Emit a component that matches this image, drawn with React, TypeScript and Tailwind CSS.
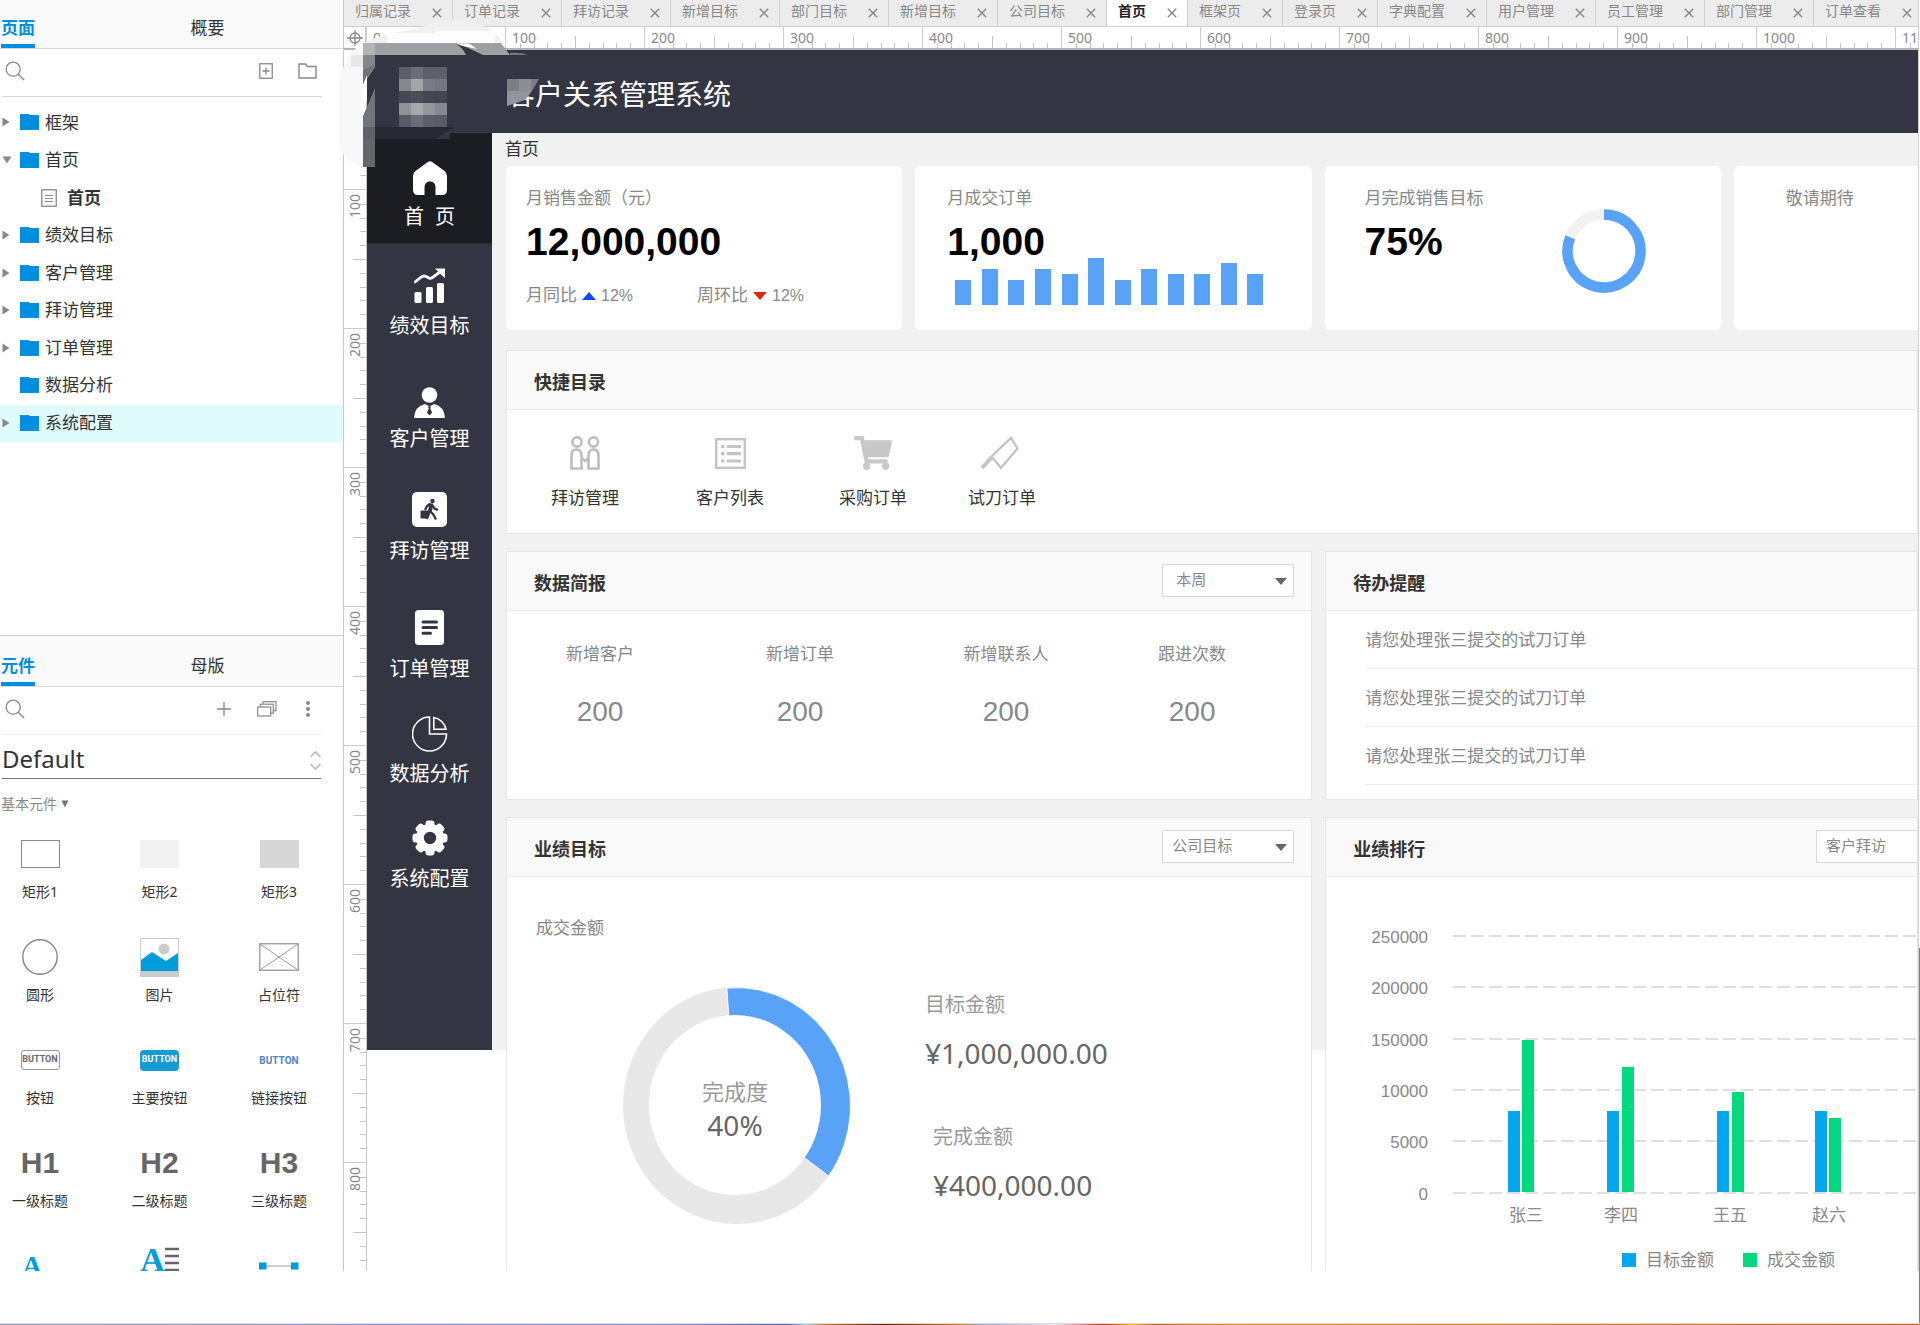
import React from "react";
import { FaShoppingCart } from "react-icons/fa";

const pageTree = [
  { label: "框架", state: "closed" },
  { label: "首页", state: "open" },
  { label: "首页", state: "page" },
  { label: "绩效目标", state: "closed" },
  { label: "客户管理", state: "closed" },
  { label: "拜访管理", state: "closed" },
  { label: "订单管理", state: "closed" },
  { label: "数据分析", state: "leaf" },
  { label: "系统配置", state: "closed", selected: true },
];

const fileTabs = [
  "归属记录", "订单记录", "拜访记录", "新增目标", "部门目标", "新增目标", "公司目标", "首页",
  "框架页", "登录页", "字典配置", "用户管理", "员工管理", "部门管理", "订单查看",
];

const rulerMarks = [0, 100, 200, 300, 400, 500, 600, 700, 800, 900, 1000, 1100];
const minorTicks = [0, 1, 2, 3, 4, 5, 6, 7, 8, 9];

/* ---------- small icons ---------- */

function SearchIcon() {
  return (
    <svg width="20" height="20" viewBox="0 0 22 22" fill="none" stroke="#888" strokeWidth="1.5">
      <circle cx="9" cy="9" r="7.7" />
      <path d="M14.3 14.3 21 21" />
    </svg>
  );
}

function FolderIcon() {
  return (
    <svg width="19" height="16" viewBox="0 0 19 16" fill="#008fe0">
      <path d="M0 0h9l0.500 1H19v15H0z" />
    </svg>
  );
}

function PageIcon() {
  return (
    <svg width="16" height="18" viewBox="0 0 16 18" fill="none" stroke="#888">
      <rect x="0.75" y="0.75" width="14.5" height="16.5" strokeWidth="1.3" />
      <path d="M4 6.5h8M4 9.5h8M4 12.5h8" />
    </svg>
  );
}

function Caret({ open }: { open: boolean }) {
  return open ? (
    <svg width="10" height="8" viewBox="0 0 10 8" fill="#888"><path d="M0.5 0.5h9L5 7.5z" /></svg>
  ) : (
    <svg width="8" height="10" viewBox="0 0 8 10" fill="#888"><path d="M0.5 0.5v9L7.5 5z" /></svg>
  );
}

/* ---------- left panel ---------- */

function PanelTabs({ first, second, className }: { first: string; second: string; className: string }) {
  return (
    <div className={"grid grid-cols-[190fr_153fr] border-b border-[#d6d6d6] bg-[#fafafa] pl-px text-[17px] leading-6 " + className}>
      <div className="flex">
        <button className="flex items-end border-b-4 border-[#008fe0] pb-1 font-bold text-[#008fe0]">{first}</button>
      </div>
      <div className="flex">
        <button className="flex items-end border-b-4 border-transparent pb-1 text-[#333]">{second}</button>
      </div>
    </div>
  );
}

function PagesPanel() {
  return (
    <section className="flex h-[635px] shrink-0 flex-col">
      <PanelTabs first="页面" second="概要" className="h-[49px]" />
      <div className="ml-0.5 mr-[21px] flex h-12 items-center border-b border-[#d6d6d6] pb-1 pl-[3px] pr-[5px]">
        <SearchIcon />
        <input aria-label="搜索页面" className="min-w-0 flex-1 outline-none" />
        <button aria-label="添加页面" className="mr-[25px]">
          <svg width="14" height="16" viewBox="0 0 14 16" fill="none" stroke="#888" strokeWidth="1.3">
            <rect x="0.75" y="0.75" width="12.5" height="14.5" />
            <path d="M3.5 8h7M7 4.5v7" />
          </svg>
        </button>
        <button aria-label="添加文件夹">
          <svg width="19" height="16" viewBox="0 0 19 16" fill="none" stroke="#888" strokeWidth="1.4">
            <path d="M1 1h6.500l2 2.500H18V15H1z" />
          </svg>
        </button>
      </div>
      <ul className="mt-[7px] flex h-[338px] flex-col text-[17px] text-[#333]">
        {pageTree.map((n, i) => (
          <li key={i} className={n.selected ? "flex flex-1 bg-[#e0fbfb]" : "flex flex-1"}>
            {n.state === "page" ? (
              <button className="flex w-full items-center gap-2.5 pl-[41px] font-bold">
                <PageIcon />
                {n.label}
              </button>
            ) : (
              <button className="flex w-full items-center pb-px pl-0.5">
                <span className="w-[18px]">{n.state !== "leaf" && <Caret open={n.state === "open"} />}</span>
                <FolderIcon />
                <span className="pl-1.5">{n.label}</span>
              </button>
            )}
          </li>
        ))}
      </ul>
    </section>
  );
}

const widgets: { label?: string; icon: React.ReactNode }[] = [
  { label: "矩形1", icon: <span className="block h-7 w-[39px] border border-[#888] bg-white" /> },
  { label: "矩形2", icon: <span className="block h-7 w-[39px] bg-[#f2f2f2]" /> },
  { label: "矩形3", icon: <span className="block h-7 w-[39px] bg-[#d7d7d7]" /> },
  {
    label: "圆形",
    icon: (
      <svg width="36" height="36" viewBox="0 0 36 36" fill="none" stroke="#888" strokeWidth="1.400"><circle cx="18" cy="18" r="17.200" /></svg>
    ),
  },
  {
    label: "图片",
    icon: (
      <svg width="39" height="39" viewBox="0 0 39 39">
        <rect x="0.5" y="0.5" width="38" height="38" fill="#fff" stroke="#ccc" />
        <rect x="0" y="33" width="39" height="6" fill="#cbcbcb" />
        <circle cx="24" cy="11" r="5.5" fill="#cbcbcb" />
        <path d="M1 22 12 14 26 23 38 15V33H1z" fill="#009ddc" />
      </svg>
    ),
  },
  {
    label: "占位符",
    icon: (
      <svg width="40" height="28" viewBox="0 0 40 28" fill="none" stroke="#999">
        <rect x="0.75" y="0.75" width="38.500" height="26.500" strokeWidth="1.3" />
        <path d="M1 1 39 27M39 1 1 27" />
      </svg>
    ),
  },
  { label: "按钮", icon: <span className="flex h-5 w-[39px] items-center justify-center rounded-[3px] border border-[#999] font-['Roboto'] text-[9px] font-bold text-[#666]">BUTTON</span> },
  { label: "主要按钮", icon: <span className="flex h-[21px] w-[39px] items-center justify-center rounded-[4px] bg-[#169bd5] font-['Roboto'] text-[9px] font-bold text-white">BUTTON</span> },
  { label: "链接按钮", icon: <span className="font-['Roboto'] text-[10px] font-bold text-[#4a86c8]">BUTTON</span> },
  { label: "一级标题", icon: <span className="font-['Liberation_Sans'] text-[30px] font-bold leading-9 text-[#666]">H1</span> },
  { label: "二级标题", icon: <span className="font-['Liberation_Sans'] text-[30px] font-bold leading-9 text-[#666]">H2</span> },
  { label: "三级标题", icon: <span className="font-['Liberation_Sans'] text-[30px] font-bold leading-9 text-[#666]">H3</span> },
  { icon: <span className="pr-4 font-['Liberation_Serif'] text-[28px] font-bold leading-9 text-[#009ddc]">A</span> },
  {
    icon: (
      <span className="flex h-10 items-start">
        <span className="font-['Liberation_Serif'] text-[34px] font-bold leading-7 text-[#009ddc]">A</span>
        <svg width="14" height="34" viewBox="0 0 14 34" stroke="#666" strokeWidth="2.500">
          <path d="M0 3h14M0 10h14M0 17h14M0 24h14M0 31h14" />
        </svg>
      </span>
    ),
  },
  {
    icon: (
      <svg width="40" height="8" viewBox="0 0 40 8" fill="#009ddc">
        <path d="M7 4h26" stroke="#bbb" strokeWidth="1.500" />
        <rect x="0" y="0.500" width="7.500" height="7" />
        <rect x="32" y="0.500" width="7.500" height="7" />
      </svg>
    ),
  },
];

function WidgetsPanel() {
  return (
    <section className="min-h-0 flex-1 overflow-hidden border-t border-[#d0d0d0]">
      <PanelTabs first="元件" second="母版" className="h-[51px]" />
      <div className="ml-0.5 mr-[21px] flex h-12 items-center border-b border-[#ececec] pb-1 pl-[3px] pr-3">
        <SearchIcon />
        <input aria-label="搜索元件" className="min-w-0 flex-1 outline-none" />
        <button aria-label="添加元件库" className="mr-[26px]">
          <svg width="14" height="14" viewBox="0 0 14 14" stroke="#888" strokeWidth="1.3"><path d="M0 7h14M7 0v14" /></svg>
        </button>
        <button aria-label="元件库" className="mr-[29px]">
          <svg width="20" height="16" viewBox="0 0 20 16" fill="#fff" stroke="#888" strokeWidth="1.200">
            <rect x="6" y="0.700" width="13" height="9" />
            <rect x="3.300" y="3.200" width="13" height="9" />
            <rect x="0.700" y="6" width="13" height="9" />
          </svg>
        </button>
        <button aria-label="更多">
          <svg width="4" height="16" viewBox="0 0 4 16" fill="#888">
            <circle cx="2" cy="2" r="2" /><circle cx="2" cy="8" r="2" /><circle cx="2" cy="14" r="2" />
          </svg>
        </button>
      </div>
      <div className="relative ml-0.5 mr-[22px] border-b border-[#777]">
        <select aria-label="元件库选择" className="block h-[43px] w-full appearance-none bg-transparent pt-1 text-[24px] leading-9 text-[#333] outline-none">
          <option>Default</option>
        </select>
        <svg className="pointer-events-none absolute right-0 top-4" width="11" height="20" viewBox="0 0 11 20" fill="none" stroke="#bbb" strokeWidth="1.700">
          <path d="M0.500 6 5.500 1 10.500 6M0.500 13 5.500 18 10.500 13" />
        </svg>
      </div>
      <button className="mt-[14px] flex items-center gap-1 pl-px text-[14px] leading-[22px] text-[#888]">
        基本元件
        <svg width="8" height="8" viewBox="0 0 8 8" fill="#777"><path d="M0.500 0.500h7L4 7.500z" /></svg>
      </button>
      <ul className="mt-[19px] grid grid-cols-[80px_159px_80px] text-[14px] text-[#333]">
        {widgets.map((w, i) => (
          <li key={i} className="flex flex-col items-center">
            <span className="flex h-10 items-center">{w.icon}</span>
            {w.label && <span className="mb-[35px] mt-2 leading-5">{w.label}</span>}
          </li>
        ))}
      </ul>
    </section>
  );
}

/* ---------- editor chrome ---------- */

function FileTabs() {
  return (
    <nav className="flex h-[27px] shrink-0 overflow-hidden border-b border-[#cfcfcf] bg-[#ececec] text-[14px] text-[#888]">
      {fileTabs.map((t, i) => (
        <div
          key={i}
          className={
            t === "首页"
              ? "flex shrink-0 gap-[21px] border-r border-[#cfcfcf] bg-white px-2.5 pl-[11px] font-bold text-[#222]"
              : "flex shrink-0 gap-[21px] border-r border-[#cfcfcf] px-2.5 pl-[11px]"
          }
        >
          <a href="#" className="leading-[22px]">{t}</a>
          <button aria-label={"关闭" + t}>
            <svg width="10" height="10" viewBox="0 0 10 10" stroke="#888" strokeWidth="1.400"><path d="M0.800 0.800 9.200 9.200M9.200 0.800 0.800 9.200" /></svg>
          </button>
        </div>
      ))}
    </nav>
  );
}

function HorizontalRuler() {
  return (
    <div className="flex h-[23px] shrink-0 overflow-hidden border-b-2 border-[#b4b4b8] bg-white text-[14px] text-[#888]">
      <div className="flex w-[22px] shrink-0 items-center justify-center border-r border-[#c8c8c8]">
        <svg width="16" height="16" viewBox="0 0 16 16" fill="none" stroke="#888" strokeWidth="1.300">
          <circle cx="8" cy="8" r="5" />
          <path d="M8 0v16M0 8h16" />
        </svg>
      </div>
      {rulerMarks.map((m) => (
        <div key={m} className="relative grid w-[139px] shrink-0 grid-cols-10 items-end border-l border-[#ccc]">
          {minorTicks.map((k) => (
            <span
              key={k}
              className={k === 0 ? "" : k === 5 ? "h-3 border-l border-[#c4c4c4]" : "h-[5px] border-l border-[#c4c4c4]"}
            />
          ))}
          <span className="absolute left-1.5 top-0 leading-[22px]">{m}</span>
        </div>
      ))}
    </div>
  );
}

function VerticalRuler() {
  return (
    <div className="w-[23px] shrink-0 overflow-hidden border-r border-[#c8c8c8] bg-white text-[14px] text-[#888]">
      {rulerMarks.slice(0, 9).map((m) => (
        <div key={m} className={m === 0 ? "relative grid h-[139px] grid-rows-10 justify-end" : "relative grid h-[139px] grid-rows-10 justify-end border-t border-[#ccc]"}>
          {minorTicks.map((k) => (
            <span
              key={k}
              className={k === 0 ? "" : k === 5 ? "ml-auto w-[13px] border-t border-[#c4c4c4]" : "ml-auto w-1.5 border-t border-[#c4c4c4]"}
            />
          ))}
          <span className="absolute left-0 top-1 rotate-180 leading-[22px] [writing-mode:vertical-rl]">{m}</span>
        </div>
      ))}
    </div>
  );
}

const logoCells = [
  ["#5c5e69", "#6c6e77", "#5d5f6a", "#5d5f6a"],
  ["#868890", "#a5a5a9", "#7a7c85", "#75777f"],
  ["#454955", "#4b4e59", "#444751", "#41454f"],
  ["#90929a", "#a8a8ac", "#94969d", "#868890"],
  ["#575a66", "#6b6d76", "#5c5f6a", "#595c68"],
];

/* Pixelated logo with the brush marks round it. */
function LogoMosaic() {
  return (
    <svg className="pointer-events-none absolute -left-[9px] top-[15px]" width="215" height="160" viewBox="0 0 215 160">
      <path d="M28 28 Q44 20 62 17 Q84 15 98 7 Q118 2 136 7 Q158 12 168 28z" fill="#f0f0f0" />
      <path d="M52 18H100V16H160V28H52z" fill="#fdfdfd" />
      <path d="M28 28 Q14 36 8 54 Q4 60 4 72V126Q5 145 28 151z" fill="#f8f8f8" />
      <path d="M16 40H28V52H16z" fill="#e8e8e8" />
      <path d="M28 28H166L175 40H28z" fill="#9fa0a4" />
      <path d="M28 28H40V40H28z" fill="#b4b4b7" />
      <path d="M121 29 131 32 148 40H131Q128 33 121 29z" fill="#333642" />
      <path d="M121 28.500H134L142 34 128 31z" fill="#fff" />
      <path d="M175 38Q185 37 193 40H175z" fill="#777983" />
      <path d="M40 40H115V124H40z" fill="#333642" />
      <path d="M32 56H40V112H32z" fill="#333642" />
      <path d="M28 40H40V52L28 70z" fill="#84868c" />
      <path d="M28 55 40 50 32 62 28 70z" fill="#717379" />
      <path d="M28 70 32 60V84L28 101z" fill="#fff" />
      <path d="M40 73 28 101V152H40z" fill="#72747c" />
      <path d="M28 112H40V124H28z" fill="#5f616a" />
      <path d="M28 124H40V152H28z" fill="#66676b" />
      <path d="M40 112H120L100 124H40z" fill="#262833" />
      {logoCells.map((row, r) =>
        row.map((c, k) => <rect key={r + "-" + k} x={64 + k * 12} y={52 + r * 12} width="12" height="12" fill={c} />)
      )}
      <path d="M172 64H204L197 76H172z" fill="#7c7e86" />
      <path d="M184 64H196V76H184z" fill="#8c8e96" />
      <path d="M172 76H197L190 85 172 91z" fill="#92949b" />
    </svg>
  );
}

/* ---------- prototype sidebar ---------- */

const gearTeeth = [0, 45, 90, 135, 180, 225, 270, 315];

const navItems: { label: string; box: string; gap: string; icon: React.ReactNode }[] = [
  {
    label: "首  页",
    box: "border-b border-[#2a2c36] bg-[#1c1d22] pt-[27px] pb-3",
    gap: "mt-[7px]",
    icon: (
      <svg width="34" height="34" viewBox="0 0 34 34" fill="#fff">
        <path d="M14.500 1.200Q17-0.800 19.500 1.200L31.500 10Q34 12 34 15V29Q34 34 29 34H22.500V26Q22 20.500 17 20.500Q12 20.500 11.500 26V34H5Q0 34 0 29V15Q0 12 2.500 10z" />
      </svg>
    ),
  },
  {
    label: "绩效目标",
    box: "pt-6",
    gap: "mt-2",
    icon: (
      <svg width="31" height="36" viewBox="0 0 31 36" fill="#fff">
        <rect x="0.500" y="24" width="7" height="11" rx="1.500" />
        <rect x="12" y="19" width="7" height="16" rx="1.500" />
        <rect x="23" y="15" width="7" height="20" rx="1.500" />
        <path d="M1 14 8 8.500Q10 7.500 12 8.500L15 10Q17 11 19 9L28 2.500" fill="none" stroke="#fff" strokeWidth="2.800" strokeLinecap="round" />
        <path d="M21 0.500H31V10L27.500 7z" />
      </svg>
    ),
  },
  {
    label: "客户管理",
    box: "pt-11",
    gap: "mt-[5px]",
    icon: (
      <svg width="31" height="31" viewBox="0 0 31 31" fill="#fff">
        <circle cx="15.500" cy="8" r="7.800" />
        <path d="M0 31Q1 19 11 17L15.500 19.500 20 17Q30 19 31 31z" />
        <path d="M13.800 19.500H17.200L16.200 21.500 18.200 25.500 15.500 28.500 12.800 25.500 14.800 21.500z" fill="#333642" />
      </svg>
    ),
  },
  {
    label: "拜访管理",
    box: "pt-[38px]",
    gap: "mt-2.5",
    icon: (
      <svg width="35" height="35" viewBox="0 0 35 35">
        <rect width="35" height="35" rx="5" fill="#fff" />
        <circle cx="20.500" cy="9" r="2.200" fill="#333642" />
        <path d="M18.500 11.500 15 14 13 18M19 12 17.500 19 21 22 24 27.500M17.500 19 16.500 23 14.500 27M20 13 22.500 16.500 26 18" fill="none" stroke="#333642" strokeWidth="2.300" />
        <path d="M17 11.500H21L20 20H16z" fill="#333642" />
        <rect x="8.500" y="18.500" width="8" height="8" rx="1" fill="#333642" />
      </svg>
    ),
  },
  {
    label: "订单管理",
    box: "pt-11",
    gap: "mt-2.5",
    icon: (
      <svg width="29" height="35" viewBox="0 0 29 35">
        <rect width="29" height="35" rx="3.500" fill="#fff" />
        <path d="M8 12H21.500M8 17.500H21.500M8 23.200H15.500" stroke="#333642" strokeWidth="3" strokeLinecap="round" />
      </svg>
    ),
  },
  {
    label: "数据分析",
    box: "pt-[33px]",
    gap: "mt-2",
    icon: (
      <svg width="36" height="36" viewBox="0 0 36 36" fill="none" stroke="#fff" strokeWidth="1.600">
        <path d="M17.500 1V18H34.500A17 17 0 1 1 17.500 1z" />
        <path d="M21.800 1.500A15 15 0 0 1 34 13.200H21.800z" />
      </svg>
    ),
  },
  {
    label: "系统配置",
    box: "pt-8",
    gap: "mt-[9px]",
    icon: (
      <svg width="36" height="36" viewBox="-18 -18 36 36">
        {gearTeeth.map((a) => (
          <rect key={a} x="-4.500" y="-17.500" width="9" height="12" rx="3" fill="#fff" transform={"rotate(" + a + ")"} />
        ))}
        <circle r="14" fill="#fff" />
        <circle r="6.200" fill="#333642" />
      </svg>
    ),
  },
];

function SideNav() {
  return (
    <nav className="flex w-[125px] shrink-0 flex-col self-start bg-[#333642] pb-[157px] text-[20px] text-white">
      {navItems.map((n) => (
        <a key={n.label} href="#" className={"flex flex-col items-center " + n.box}>
          <span className="flex h-9 items-center">{n.icon}</span>
          <span className={"whitespace-pre leading-7 " + n.gap}>{n.label}</span>
        </a>
      ))}
    </nav>
  );
}

/* ---------- dashboard ---------- */

const barHeights = [25, 36, 25, 36, 31, 47, 25, 36, 31, 31, 42, 31];

function KpiCards() {
  return (
    <div className="grid h-[164px] grid-cols-[396fr_396fr_396fr_184fr] gap-[13px] text-[17px] text-[#888]">
      <section className="min-w-0 rounded-[5px] bg-white pl-5 pt-5">
        <h2 className="leading-[26px]">月销售金额（元）</h2>
        <p className="mt-2 text-[39px] font-bold leading-[44px] text-black">12,000,000</p>
        <div className="mt-5 flex items-center leading-6">
          <span>月同比</span>
          <svg className="mx-1" width="16" height="8" viewBox="0 0 16 8" fill="#0f4bff"><path d="M8 0 15 8H1z" /></svg>
          <span className="text-[16px]">12%</span>
          <span className="ml-16">周环比</span>
          <svg className="mx-1" width="16" height="8" viewBox="0 0 16 8" fill="#e0230f"><path d="M1 0H15L8 8z" /></svg>
          <span className="text-[16px]">12%</span>
        </div>
      </section>
      <section className="min-w-0 rounded-[5px] bg-white pl-8 pt-5">
        <h2 className="leading-[26px]">月成交订单</h2>
        <p className="mt-2 text-[39px] font-bold leading-[44px] text-black">1,000</p>
        <div className="-mt-1.5 ml-2 mr-12 flex h-[47px] items-end justify-between">
          {barHeights.map((h, i) => (
            <span key={i} className="w-4 bg-[#58a2f7]" style={{ height: h }} />
          ))}
        </div>
      </section>
      <section className="flex min-w-0 justify-between rounded-[5px] bg-white pl-10 pr-[74px] pt-5">
        <div>
          <h2 className="leading-[26px]">月完成销售目标</h2>
          <p className="mt-2 text-[39px] font-bold leading-[44px] text-black">75%</p>
        </div>
        <svg className="mt-[22px]" width="86" height="86" viewBox="-43 -43 86 86" fill="none" strokeWidth="10.500">
          <circle r="36.500" stroke="#f2f2f2" />
          <path d="M0-36.500A36.500 36.500 0 1 1-33.800-13.700" stroke="#58a2f7" />
        </svg>
      </section>
      <section className="min-w-0 rounded-l-[5px] bg-white pl-[52px] pt-5">
        <h2 className="leading-[26px]">敬请期待</h2>
      </section>
    </div>
  );
}

function Panel({ title, action, children }: { title: string; action?: React.ReactNode; children: React.ReactNode }) {
  return (
    <section className="flex min-w-0 flex-col overflow-hidden border border-[#e6e6e6] bg-white">
      <header className="flex h-[59px] shrink-0 items-center justify-between border-b border-[#ebebeb] bg-[#f9f9f9] pl-[27px] pr-[17px]">
        <h2 className="pt-1.5 text-[18px] font-bold text-[#333]">{title}</h2>
        {action}
      </header>
      {children}
    </section>
  );
}

function Picker({ label, value, pad }: { label: string; value: string; pad: string }) {
  return (
    <div className="relative -mt-0.5 w-[132px] shrink-0">
      <select aria-label={label} className={"block h-[33px] w-full appearance-none border border-[#d9d9d9] bg-white text-[15px] text-[#888] outline-none " + pad}>
        <option>{value}</option>
      </select>
      <svg className="pointer-events-none absolute right-[7px] top-[14px]" width="12" height="7" viewBox="0 0 12 7" fill="#666"><path d="M0 0H12L6 7z" /></svg>
    </div>
  );
}

const shortcuts: { label: string; box: string; icon: React.ReactNode }[] = [
  {
    label: "拜访管理",
    box: "",
    icon: (
      <svg width="30" height="34" viewBox="0 0 30 34" fill="none" stroke="#bdbdbd" strokeWidth="2.600">
        <circle cx="7" cy="6" r="4.600" /><circle cx="23.500" cy="6" r="4.600" />
        <path d="M1.500 32.500V20Q1.500 13.500 6.500 13.500 11.500 13.500 11.500 20V32.500z" />
        <path d="M18.500 32.500V20Q18.500 13.500 23.500 13.500 28.500 13.500 28.500 20V32.500z" />
        <path d="M11.500 22 15 25 18.500 22" />
      </svg>
    ),
  },
  {
    label: "客户列表",
    box: "ml-[77px]",
    icon: (
      <svg width="31" height="31" viewBox="0 0 31 31" fill="none" stroke="#c4c4c4" strokeWidth="2.400">
        <rect x="1.200" y="1.200" width="28.600" height="28.600" />
        <path d="M6 8.500h3.500M12 8.500h14M6 15.700h3.500M12 15.700h14M6 23h3.500M12 23h14" strokeWidth="3.200" />
      </svg>
    ),
  },
  { label: "采购订单", box: "ml-[75px]", icon: <FaShoppingCart size={38} color="#c8c8c8" /> },
  {
    label: "试刀订单",
    box: "ml-[61px]",
    icon: (
      <svg className="mr-1.5" width="39" height="34" viewBox="0 0 39 34" fill="none" stroke="#c4c4c4" strokeWidth="2.400">
        <path d="M31 1.800 37.500 12.500 21 32 11.500 20.500z" />
        <path d="M12 21 2 32" strokeWidth="4" />
      </svg>
    ),
  },
];

const briefing = ["新增客户", "新增订单", "新增联系人", "跟进次数"];

const chartRows = [
  { label: "250000", y: 59 }, { label: "200000", y: 110 }, { label: "150000", y: 162 },
  { label: "10000", y: 213 }, { label: "5000", y: 264 }, { label: "0", y: 316 },
];
const chartBars = [
  { name: "张三", blue: 182, green: 196, top: 163, cx: 200 },
  { name: "李四", blue: 281, green: 296, top: 190, cx: 295 },
  { name: "王五", blue: 391, green: 406, top: 215, cx: 404 },
  { name: "赵六", blue: 489, green: 503, top: 241, cx: 503 },
];

function RankingChart() {
  return (
    <svg className="w-full" height="395" fontSize="17" fill="#888">
      {chartRows.map((r) => (
        <g key={r.label}>
          <path d={"M127 " + r.y + "H600"} stroke="#dfdfdf" strokeWidth="2" strokeDasharray="13 5" />
          <text x="102" y={r.y + 7} textAnchor="end">{r.label}</text>
        </g>
      ))}
      {chartBars.map((b) => (
        <g key={b.name}>
          <rect x={b.blue} y="234" width="12" height="81" fill="#02a7f0" />
          <rect x={b.green} y={b.top} width="12" height={315 - b.top} fill="#00d97e" />
          <text x={b.cx} y="344" textAnchor="middle">{b.name}</text>
        </g>
      ))}
      <rect x="296" y="376" width="14" height="14" fill="#02a7f0" />
      <text x="320" y="389">目标金额</text>
      <rect x="417" y="376" width="14" height="14" fill="#00d97e" />
      <text x="441" y="389">成交金额</text>
    </svg>
  );
}

function Dashboard() {
  return (
    <main className="min-w-0 flex-1 bg-[linear-gradient(#f1f1f1_917px,#fff_917px)] pl-[14px]">
      <h1 className="-ml-px h-[33px] text-[17px] leading-[34px] text-[#333]">首页</h1>
      <KpiCards />
      <div className="mt-5 grid grid-cols-[805fr_592fr] gap-x-[13px] gap-y-[17px]">
        <div className="col-span-2 grid h-[184px]">
          <Panel title="快捷目录">
            <ul className="flex pl-11 pt-[25px] text-[17px] text-[#333]">
              {shortcuts.map((s) => (
                <li key={s.label} className={s.box}>
                  <a href="#" className="flex flex-col items-center">
                    <span className="flex h-9 items-center">{s.icon}</span>
                    <span className="mt-4 leading-6">{s.label}</span>
                  </a>
                </li>
              ))}
            </ul>
          </Panel>
        </div>
        <div className="grid h-[249px] min-w-0">
          <Panel title="数据简报" action={<Picker label="时间范围" value="本周" pad="pl-[13px]" />}>
            <dl className="grid grid-cols-[186fr_214fr_198fr_174fr_32fr] pt-8 text-center text-[#888]">
              {briefing.map((b) => (
                <div key={b}>
                  <dt className="text-[17px] leading-6">{b}</dt>
                  <dd className="mt-7 text-[28px] leading-[34px]">200</dd>
                </div>
              ))}
            </dl>
          </Panel>
        </div>
        <Panel title="待办提醒">
          <ul className="pl-[39px] text-[17px] text-[#888]">
            {[1, 2, 3].map((k) => (
              <li key={k} className="h-[58px] border-b border-[#ededed] leading-[59px]">请您处理张三提交的试刀订单</li>
            ))}
          </ul>
        </Panel>
        <Panel title="业绩目标" action={<Picker label="目标类型" value="公司目标" pad="pl-[9px]" />}>
          <h3 className="pl-[29px] pt-10 text-[17px] leading-6 text-[#888]">成交金额</h3>
          <div className="ml-[116px] mt-[46px] flex gap-[74px] pb-16 font-['Noto_Sans','Noto_Sans_CJK_SC',sans-serif]">
            <div className="grid">
              <svg className="col-start-1 row-start-1" width="228" height="237" viewBox="0 0 228 237">
                <ellipse cx="114" cy="118.500" rx="114" ry="118.500" fill="#e8e8e8" />
                <path d="M103.800 1A114 118.500 0 0 1 205.600 189L112 118z" fill="#58a2f7" stroke="#fff" />
                <ellipse cx="112" cy="118" rx="86" ry="90" fill="#fff" />
              </svg>
              <div className="col-start-1 row-start-1 flex flex-col items-center justify-center pr-1 pt-2">
                <span className="text-[22px] leading-7 text-[#999]">完成度</span>
                <span className="mt-0.5 text-[28px] leading-9 text-[#666]">40%</span>
              </div>
            </div>
            <dl className="pt-1">
              <dt className="text-[20px] leading-7 text-[#999]">目标金额</dt>
              <dd className="mt-4 text-[28px] leading-9 text-[#666]">¥1,000,000.00</dd>
              <dt className="ml-2 mt-[52px] text-[20px] leading-7 text-[#999]">完成金额</dt>
              <dd className="ml-2 mt-4 text-[28px] leading-9 text-[#666]">¥400,000.00</dd>
            </dl>
          </div>
        </Panel>
        <Panel
          title="业绩排行"
          action={<div className="-mr-12"><Picker label="排行类型" value="客户拜访" pad="pl-[9px]" /></div>}
        >
          <RankingChart />
        </Panel>
      </div>
    </main>
  );
}

export default function App() {
  return (
    <div className="flex h-screen flex-col overflow-hidden bg-white font-['Noto_Sans','Noto_Sans_CJK_SC',sans-serif]">
      <div className="flex min-h-0 flex-1">
        <aside className="flex w-[344px] shrink-0 flex-col border-r border-[#c8c8c8]">
          <PagesPanel />
          <WidgetsPanel />
        </aside>
        <div className="flex min-w-0 flex-1 flex-col border-r border-[#d0d0d0]">
          <FileTabs />
          <HorizontalRuler />
          <div className="flex min-h-0 flex-1">
            <VerticalRuler />
            <div className="relative flex min-w-0 flex-1 flex-col font-['Liberation_Sans','Noto_Sans_CJK_SC',sans-serif]">
              <header className="h-[83px] shrink-0 bg-[#333642] pl-[140px] text-[28px] leading-[92px] text-white">客户关系管理系统</header>
              <div className="flex min-h-0 flex-1 overflow-hidden">
                <SideNav />
                <Dashboard />
              </div>
              <div className="absolute left-0 top-0 -ml-[23px] -mt-[50px]">
                <LogoMosaic />
              </div>
            </div>
          </div>
        </div>
        <div className="flex w-px items-end justify-end">
          <div className="h-[323px] w-px bg-[#c8692f]" />
        </div>
      </div>
      <footer className="flex h-[54px] shrink-0 flex-col justify-end">
        <div className="flex flex-1 justify-end"><div className="w-px bg-[#c8692f]" /></div>
        <div className="h-px bg-[#dcdcdc]" />
        <div className="h-px bg-[linear-gradient(90deg,#8fa6d0_0%,#8199c9_35%,#4f6aa8_41%,#9fd8f0_42%,#c47a1c_43%,#5a1c08_46%,#d08020_50%,#93a3cc_51%,#e8eef6_55%,#c8301a_57.500%,#f0c010_59%,#c06a1c_60%,#e8951c_64%,#cf6a20_100%)]" />
      </footer>
    </div>
  );
}
